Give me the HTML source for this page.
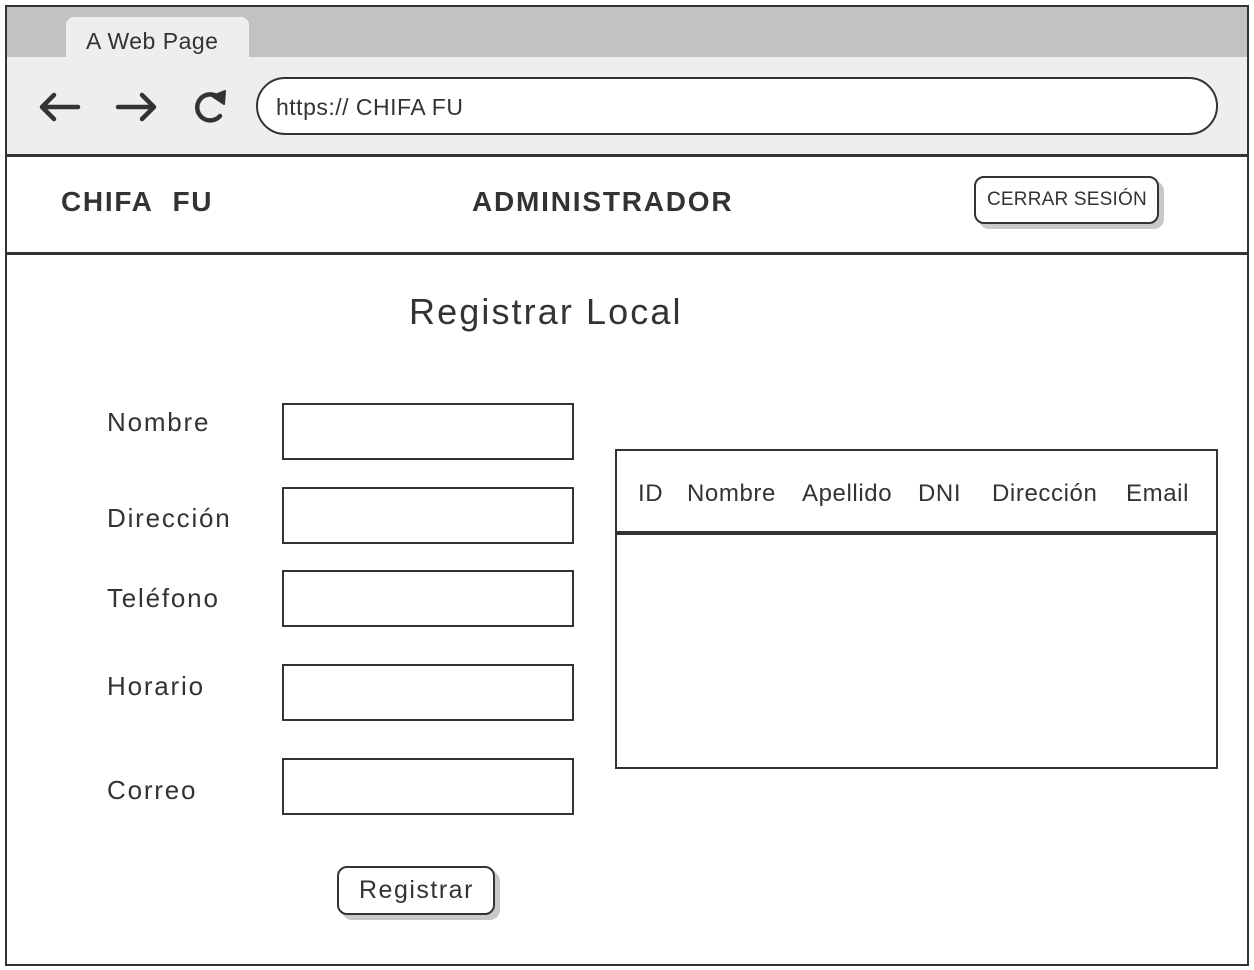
<!DOCTYPE html>
<html><head><meta charset="utf-8"><style>
*{box-sizing:border-box;margin:0;padding:0}
body{width:1254px;height:970px;background:#fff;position:relative;overflow:hidden;font-family:"Liberation Sans",sans-serif;color:#333}
.a{position:absolute}
.box{position:absolute;border:2px solid #333}
.t{position:absolute;white-space:nowrap}
.l{font-size:26px;letter-spacing:1.8px}
.h{font-size:24px;letter-spacing:0.6px;top:480px}
</style></head><body>
<div class="a" style="left:6px;top:6px;width:1242px;height:51px;background:#c2c2c2"></div>
<div class="a" style="left:6px;top:57px;width:1242px;height:98px;background:#eeeeee"></div>
<div class="a" style="left:66px;top:17px;width:183px;height:42px;background:#eeeeee;border-radius:8px 8px 0 0"></div>
<div class="t" style="left:86px;top:28px;font-size:23px;letter-spacing:0.5px">A Web Page</div>
<svg class="a" style="left:36px;top:86px" width="200" height="44" viewBox="0 0 200 44" fill="none" stroke="#333" stroke-width="4.5" stroke-linecap="round" stroke-linejoin="round">
<path d="M6 21H42M18 9L6 21L18 33"/>
<path d="M82 21H118M106 9L118 21L106 33"/>
<path d="M182 11A13 13 0 1 0 184 30"/>
<path d="M176 10L189 5L188 18Z" fill="#333" stroke-width="2"/>
</svg>
<div class="a" style="left:256px;top:77px;width:962px;height:58px;border:2px solid #333;border-radius:29px;background:#fff"></div>
<div class="t" style="left:276px;top:94px;font-size:23px;letter-spacing:0.5px">https:// CHIFA FU</div>
<div class="box" style="left:5px;top:5px;width:1244px;height:961px;border-width:2.5px"></div>
<div class="a" style="left:5px;top:154px;width:1244px;height:2.5px;background:#333"></div>
<div class="a" style="left:5px;top:252px;width:1244px;height:2.5px;background:#333"></div>
<div class="t" style="left:61px;top:186px;font-size:28px;font-weight:bold;letter-spacing:1.7px">CHIFA&nbsp; FU</div>
<div class="t" style="left:472px;top:186px;font-size:28px;font-weight:bold;letter-spacing:1.8px">ADMINISTRADOR</div>
<div class="a" style="left:979px;top:181px;width:185px;height:48px;background:#c8c8c8;border-radius:10px"></div>
<div class="a" style="left:974px;top:176px;width:185px;height:48px;border:2px solid #333;border-radius:10px;background:#fff"></div>
<div class="t" style="left:987px;top:189px;font-size:19px;letter-spacing:0.2px">CERRAR SESIÓN</div>
<div class="t" style="left:409px;top:291px;font-size:36px;letter-spacing:2.1px">Registrar Local</div>
<div class="t l" style="left:107px;top:407px">Nombre</div>
<div class="t l" style="left:107px;top:503px">Dirección</div>
<div class="t l" style="left:107px;top:583px">Teléfono</div>
<div class="t l" style="left:107px;top:671px">Horario</div>
<div class="t l" style="left:107px;top:775px">Correo</div>
<div class="box" style="left:282px;top:403px;width:292px;height:57px"></div>
<div class="box" style="left:282px;top:487px;width:292px;height:57px"></div>
<div class="box" style="left:282px;top:570px;width:292px;height:57px"></div>
<div class="box" style="left:282px;top:664px;width:292px;height:57px"></div>
<div class="box" style="left:282px;top:758px;width:292px;height:57px"></div>
<div class="box" style="left:615px;top:449px;width:603px;height:320px"></div>
<div class="a" style="left:615px;top:531px;width:603px;height:4px;background:#333"></div>
<div class="t h" style="left:638px">ID</div>
<div class="t h" style="left:687px">Nombre</div>
<div class="t h" style="left:802px">Apellido</div>
<div class="t h" style="left:918px">DNI</div>
<div class="t h" style="left:992px">Dirección</div>
<div class="t h" style="left:1126px">Email</div>
<div class="a" style="left:342px;top:871px;width:158px;height:49px;background:#c8c8c8;border-radius:10px"></div>
<div class="a" style="left:337px;top:866px;width:158px;height:49px;border:2px solid #333;border-radius:10px;background:#fff"></div>
<div class="t" style="left:359px;top:876px;font-size:25px;letter-spacing:1.5px">Registrar</div>
</body></html>
